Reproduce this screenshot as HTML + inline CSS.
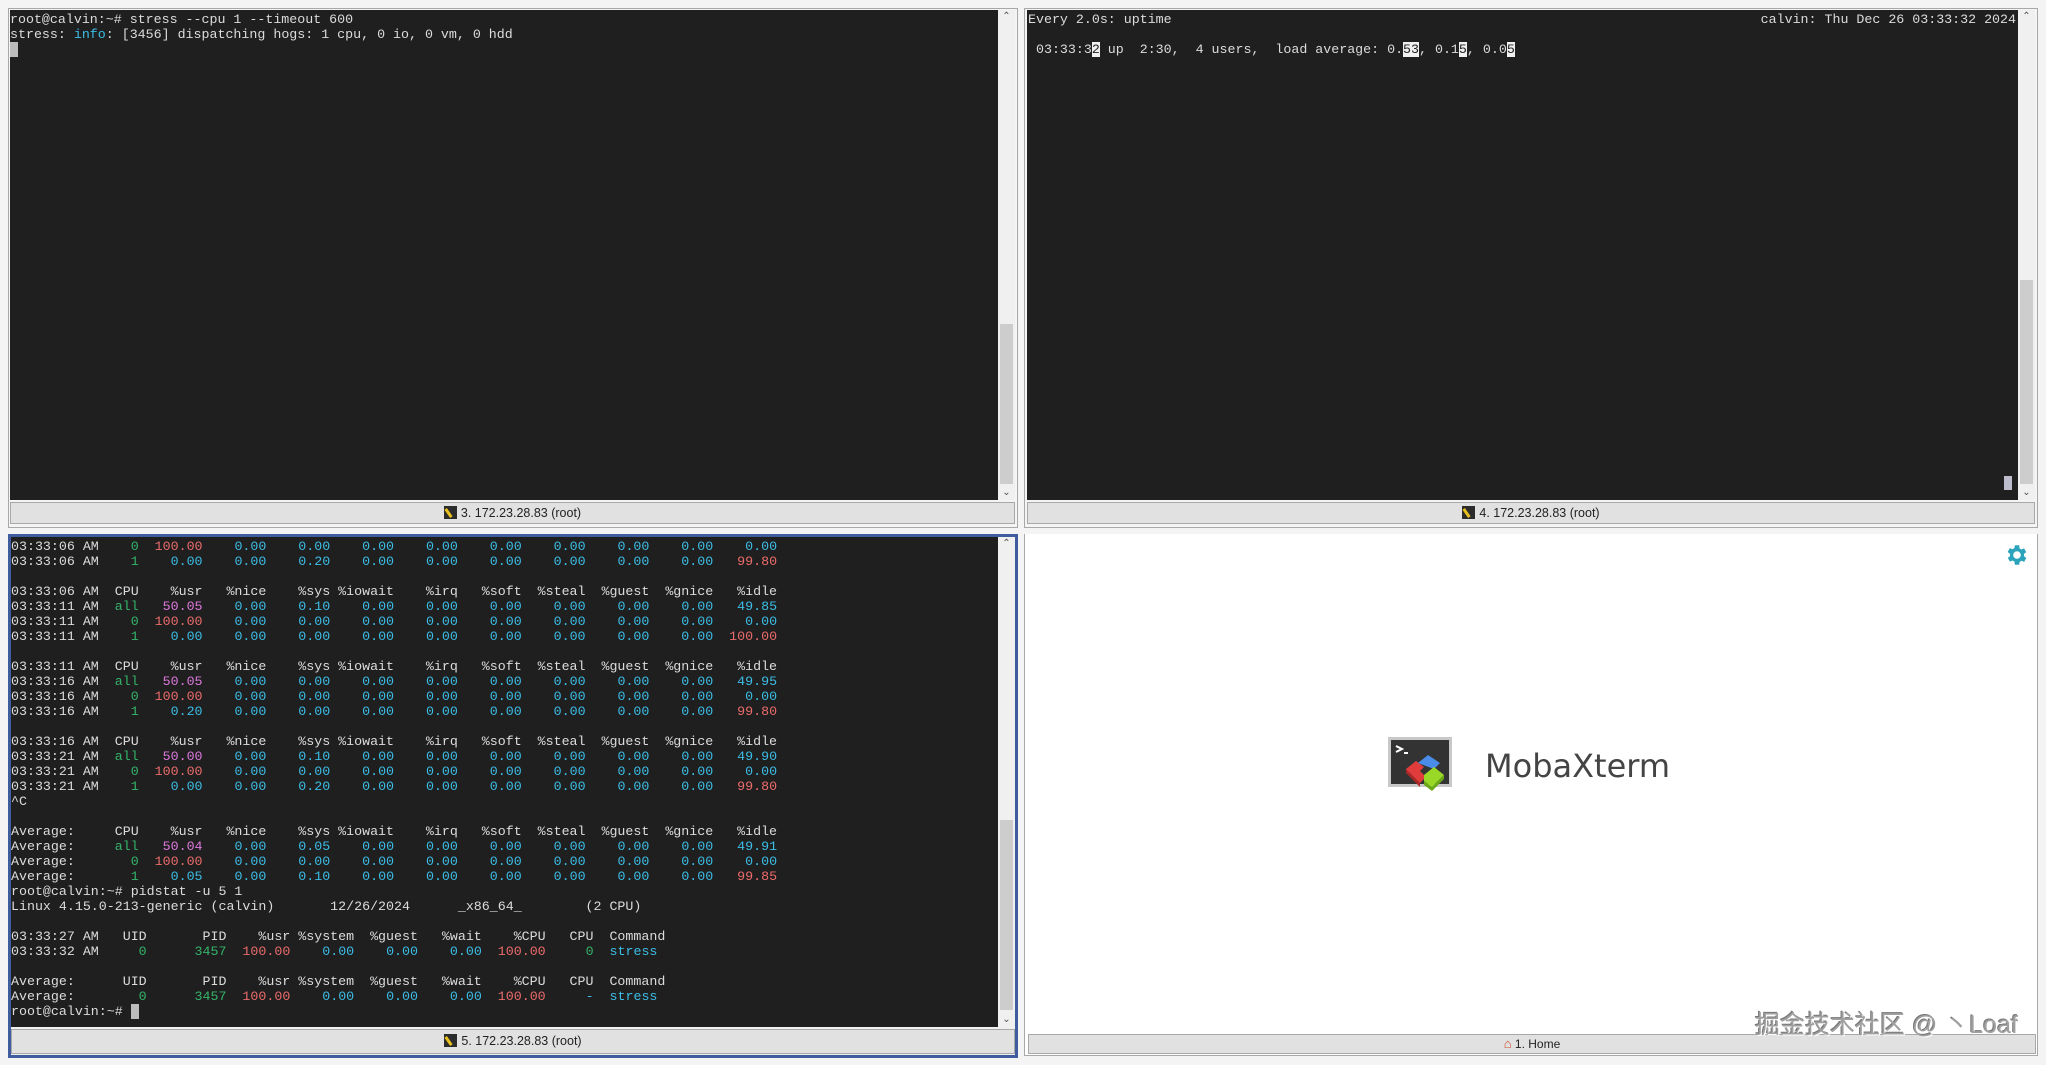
<!DOCTYPE html>
<html><head><meta charset="utf-8">
<style>
*{margin:0;padding:0;box-sizing:border-box}
body{width:2046px;height:1065px;background:#f4f4f4;position:relative;overflow:hidden;font-family:"Liberation Sans",sans-serif}
.abs{position:absolute}
.term{position:absolute;background:#1f1f1f;overflow:hidden}
pre{font-family:"Liberation Mono","DejaVu Sans Mono",monospace;font-size:13.3px;line-height:15px;color:#dcdcdc;white-space:pre}
g{color:#34b46a}m{color:#dd78dd}r{color:#ec6b6b}c{color:#1b9fb6}C{color:#3cbde6}
.sb{position:absolute;background:#f0f0f0}
.thumb{position:absolute;left:2px;right:2px;background:#cdcdcd}
.arr{position:absolute;left:0;right:0;height:14px;text-align:center;font-size:10px;color:#555;line-height:14px}
.status{position:absolute;background:#e1e1e1;border:1px solid #a8a8a8;font-size:12.5px;color:#222;text-align:center;line-height:20px}
.key{display:inline-block;width:13px;height:13px;background:#2c2c2c;vertical-align:-2px;margin-right:4px;position:relative}
.key:after{content:"";position:absolute;left:3px;top:2px;width:3px;height:10px;background:#e8c020;transform:rotate(-35deg)}
.pane{position:absolute;border:1px solid #a8a8a8;background:#f4f4f4}
.cur{background:#bcbcbc;color:#1f1f1f}
.inv{background:#f0f0f0;color:#1f1f1f}
</style></head><body>

<!-- top-left -->
<div class="pane" style="left:8px;top:8px;width:1010px;height:520px"></div>
<div class="term" style="left:10px;top:10px;width:988px;height:490px">
<pre style="padding-top:2px">root@calvin:~# stress --cpu 1 --timeout 600
stress: <C>info</C>: [3456] dispatching hogs: 1 cpu, 0 io, 0 vm, 0 hdd
<span class="cur"> </span></pre></div>
<div class="sb" style="left:998px;top:10px;width:17px;height:490px">
<div class="arr" style="top:0">&#8963;</div>
<div class="thumb" style="top:314px;height:160px"></div>
<div class="arr" style="bottom:0">&#8964;</div></div>
<div class="status" style="left:10px;top:502px;width:1005px;height:22px"><span class="key"></span>3. 172.23.28.83 (root)</div>

<!-- top-right -->
<div class="pane" style="left:1024px;top:8px;width:1014px;height:520px"></div>
<div class="term" style="left:1027px;top:10px;width:991px;height:490px">
<pre style="padding-top:2px;padding-left:1px">Every 2.0s: uptime

 03:33:3<span class="inv">2</span> up  2:30,  4 users,  load average: 0.<span class="inv">53</span>, 0.1<span class="inv">5</span>, 0.0<span class="inv">5</span></pre>
<pre class="abs" style="right:2px;top:2px">calvin: Thu Dec 26 03:33:32 2024</pre>
<div class="abs" style="left:977px;top:466px;width:8px;height:14px;background:#bcbccc"></div>
</div>
<div class="sb" style="left:2018px;top:10px;width:17px;height:490px">
<div class="arr" style="top:0">&#8963;</div>
<div class="thumb" style="top:270px;height:204px"></div>
<div class="arr" style="bottom:0">&#8964;</div></div>
<div class="status" style="left:1027px;top:502px;width:1008px;height:22px"><span class="key"></span>4. 172.23.28.83 (root)</div>

<!-- bottom-left -->
<div class="abs" style="left:8px;top:534px;width:1010px;height:524px;border:3px solid #3f5d9e;background:#f0f0f0"></div>
<div class="term" style="left:11px;top:537px;width:987px;height:490px">
<pre style="padding-top:2px">03:33:06 AM    <g>0</g><r>  100.00</r><c>    0.00    0.00    0.00    0.00    0.00    0.00    0.00    0.00    0.00</c>
03:33:06 AM    <g>1</g><c>    0.00    0.00</c><C>    0.20</C><c>    0.00    0.00    0.00    0.00    0.00    0.00</c><r>   99.80</r>

03:33:06 AM  CPU    %usr   %nice    %sys %iowait    %irq   %soft  %steal  %guest  %gnice   %idle
03:33:11 AM  <g>all</g><m>   50.05</m><c>    0.00</c><C>    0.10</C><c>    0.00    0.00    0.00    0.00    0.00    0.00</c><C>   49.85</C>
03:33:11 AM    <g>0</g><r>  100.00</r><c>    0.00    0.00    0.00    0.00    0.00    0.00    0.00    0.00    0.00</c>
03:33:11 AM    <g>1</g><c>    0.00    0.00    0.00    0.00    0.00    0.00    0.00    0.00    0.00</c><r>  100.00</r>

03:33:11 AM  CPU    %usr   %nice    %sys %iowait    %irq   %soft  %steal  %guest  %gnice   %idle
03:33:16 AM  <g>all</g><m>   50.05</m><c>    0.00    0.00    0.00    0.00    0.00    0.00    0.00    0.00</c><C>   49.95</C>
03:33:16 AM    <g>0</g><r>  100.00</r><c>    0.00    0.00    0.00    0.00    0.00    0.00    0.00    0.00    0.00</c>
03:33:16 AM    <g>1</g><C>    0.20</C><c>    0.00    0.00    0.00    0.00    0.00    0.00    0.00    0.00</c><r>   99.80</r>

03:33:16 AM  CPU    %usr   %nice    %sys %iowait    %irq   %soft  %steal  %guest  %gnice   %idle
03:33:21 AM  <g>all</g><m>   50.00</m><c>    0.00</c><C>    0.10</C><c>    0.00    0.00    0.00    0.00    0.00    0.00</c><C>   49.90</C>
03:33:21 AM    <g>0</g><r>  100.00</r><c>    0.00    0.00    0.00    0.00    0.00    0.00    0.00    0.00    0.00</c>
03:33:21 AM    <g>1</g><c>    0.00    0.00</c><C>    0.20</C><c>    0.00    0.00    0.00    0.00    0.00    0.00</c><r>   99.80</r>
^C

Average:     CPU    %usr   %nice    %sys %iowait    %irq   %soft  %steal  %guest  %gnice   %idle
Average:     <g>all</g><m>   50.04</m><c>    0.00</c><C>    0.05</C><c>    0.00    0.00    0.00    0.00    0.00    0.00</c><C>   49.91</C>
Average:       <g>0</g><r>  100.00</r><c>    0.00    0.00    0.00    0.00    0.00    0.00    0.00    0.00    0.00</c>
Average:       <g>1</g><C>    0.05</C><c>    0.00</c><C>    0.10</C><c>    0.00    0.00    0.00    0.00    0.00    0.00</c><r>   99.85</r>
root@calvin:~# pidstat -u 5 1
Linux 4.15.0-213-generic (calvin)       12/26/2024      _x86_64_        (2 CPU)

03:33:27 AM   UID       PID    %usr %system  %guest   %wait    %CPU   CPU  Command
03:33:32 AM     <g>0</g>      <g>3457</g><r>  100.00</r><c>    0.00    0.00    0.00</c><r>  100.00</r>     <g>0</g>  <C>stress</C>

Average:      UID       PID    %usr %system  %guest   %wait    %CPU   CPU  Command
Average:        <g>0</g>      <g>3457</g><r>  100.00</r><c>    0.00    0.00    0.00</c><r>  100.00</r>     <c>-</c>  <C>stress</C>
root@calvin:~# <span class="cur"> </span></pre></div>
<div class="sb" style="left:998px;top:537px;width:17px;height:490px">
<div class="arr" style="top:0">&#8963;</div>
<div class="thumb" style="top:283px;height:190px"></div>
<div class="arr" style="bottom:0">&#8964;</div></div>
<div class="status" style="left:11px;top:1029px;width:1004px;height:25px;line-height:23px"><span class="key"></span>5. 172.23.28.83 (root)</div>

<!-- bottom-right -->
<div class="abs" style="left:1024px;top:534px;width:1014px;height:522px;background:#fff;border:1px solid #a8a8a8;border-top:none"></div>
<svg class="abs" style="left:2004px;top:542px" width="26" height="26" viewBox="0 0 24 24"><path fill="#2aa3bb" d="M19.4 13a7.5 7.5 0 0 0 0-2l2.1-1.6-2-3.5-2.5 1a7.7 7.7 0 0 0-1.7-1L15 3h-4l-.4 2.7a7.7 7.7 0 0 0-1.7 1l-2.5-1-2 3.5L6.6 11a7.5 7.5 0 0 0 0 2l-2.1 1.6 2 3.5 2.5-1a7.7 7.7 0 0 0 1.7 1L11 21h4l.4-2.7a7.7 7.7 0 0 0 1.7-1l2.5 1 2-3.5zM13 15.5a3.5 3.5 0 1 1 0-7 3.5 3.5 0 0 1 0 7z" transform="translate(-1 0)"/></svg>

<svg class="abs" style="left:1388px;top:737px" width="70" height="68" viewBox="0 0 70 68">
<rect x="0" y="0" width="64" height="50" fill="#c8c8c8"/>
<rect x="3" y="3" width="58" height="44" fill="#333"/>
<path d="M8 9l6 3-6 3" stroke="#fff" stroke-width="2" fill="none"/>
<rect x="16" y="15" width="4" height="2" fill="#fff"/>
<path d="M18 32l10-8 8 6-4 4 6 6-8 8z" fill="#e03c3c"/>
<path d="M18 32l0 4 14 14 0-4z" fill="#a82828"/>
<path d="M30 26l10-8 12 8-6 6z" fill="#4a8de8"/>
<path d="M36 38l10-8 10 8-12 12-8-6z" fill="#9ad828"/>
<path d="M36 44l8 6 12-12 0 4-12 12-8-6z" fill="#6aa818"/>
</svg>
<div class="abs" style="left:1485px;top:747px;font-family:'DejaVu Sans',sans-serif;font-size:32px;color:#444">MobaXterm</div>

<div class="status" style="left:1028px;top:1034px;width:1008px;height:20px;line-height:18px;font-size:12px"><span style="color:#d04a2a;font-size:13px">&#8962;</span> 1. Home</div>
<div class="abs" style="left:1755px;top:1005px;font-family:'Liberation Sans','Noto Sans CJK SC',sans-serif;font-size:25px;color:#a0a0a0;text-shadow:1px 1px 0 #fff,-1px -1px 0 #777;white-space:nowrap">掘金技术社区 @ 丶Loaf</div>
</body></html>
